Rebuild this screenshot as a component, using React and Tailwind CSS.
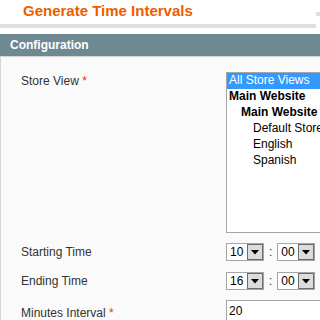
import React from "react";

function Arrow() {
  return (
    <div className="w-[16px] h-[16px] bg-[#dcdcdc] border border-[#6b6b6b] flex items-center justify-center shrink-0">
      <svg width="8" height="5" viewBox="0 0 8 5">
        <polygon points="0,0 8,0 4,4.5" fill="#000" />
      </svg>
    </div>
  );
}

function Sel({ v }) {
  return (
    <div className="w-[38px] h-[18px] border border-[#a5a5a5] bg-white flex items-center pl-[3px] justify-between shrink-0">
      <span className="text-[12px] leading-[14px] text-black">{v}</span>
      <Arrow />
    </div>
  );
}

export default function App() {
  const opts = [
    { t: "All Store Views", l: 0, b: false, s: true },
    { t: "Main Website", l: 0, b: true },
    { t: "Main Website", l: 1, b: true },
    { t: "Default Store View", l: 2 },
    { t: "English", l: 2 },
    { t: "Spanish", l: 2 },
  ];
  const pad = ["pl-[2px]", "pl-[14px]", "pl-[26px]"];
  return (
    <div className="w-[320px] h-[320px] bg-white overflow-hidden font-['Liberation_Sans',Arial,sans-serif]">
      <div className="h-[24px] flex justify-between">
        <div className="pl-[23px] pt-[1px] text-[15px] leading-[20px] font-bold text-[#eb5e00] whitespace-nowrap">
          Generate Time Intervals
        </div>
        <div className="w-[4px] h-[4px] bg-[#dfdfdf] mt-[12px] shrink-0"></div>
      </div>
      <div className="h-[4px] w-[316px] bg-[#dfdfdf]"></div>
      <div className="h-[6px]"></div>
      <div className="h-[22px] bg-[#6f8992] pl-[10px] flex items-center text-white font-bold text-[12px]">
        Configuration
      </div>
      <div className="h-[300px] bg-[#fafafa] border-l border-t border-[#d6d6d6] pt-[15px] overflow-hidden">
        <div className="flex">
          <div className="w-[225px] shrink-0 pl-[20px] pt-[2px] text-[12px] leading-[15px] text-[#333]">
            Store View <span className="text-[#eb340a]">*</span>
          </div>
          <div className="w-[110px] h-[161px] border border-[#a5a5a5] bg-white shrink-0 overflow-hidden">
            {opts.map((o, i) => (
              <div
                key={i}
                className={`h-[16px] leading-[15px] text-[12px] whitespace-nowrap ${pad[o.l]} ${
                  o.s ? "bg-[#3399ff] text-white" : "text-black"
                } ${o.b ? "font-bold" : ""}`}
              >
                {o.t}
              </div>
            ))}
          </div>
        </div>
        <div className="flex items-center mt-[10px] h-[18px]">
          <div className="w-[225px] shrink-0 pl-[20px] text-[12px] text-[#333]">Starting Time</div>
          <Sel v="10" />
          <span className="text-[12px] text-[#333] mx-[5px] shrink-0">:</span>
          <Sel v="00" />
        </div>
        <div className="flex items-center mt-[11px] h-[18px]">
          <div className="w-[225px] shrink-0 pl-[20px] text-[12px] text-[#333]">Ending Time</div>
          <Sel v="16" />
          <span className="text-[12px] text-[#333] mx-[5px] shrink-0">:</span>
          <Sel v="00" />
        </div>
        <div className="flex mt-[10px]">
          <div className="w-[225px] shrink-0 pl-[20px] pt-[4px] text-[12px] text-[#333]">
            Minutes Interval <span className="text-[#eb340a]">*</span>
          </div>
          <div className="w-[120px] h-[22px] border border-[#a5a5a5] bg-white shrink-0 pl-[2px] pt-[3px] text-[12px] leading-[14px] text-black">
            20
          </div>
        </div>
      </div>
    </div>
  );
}
